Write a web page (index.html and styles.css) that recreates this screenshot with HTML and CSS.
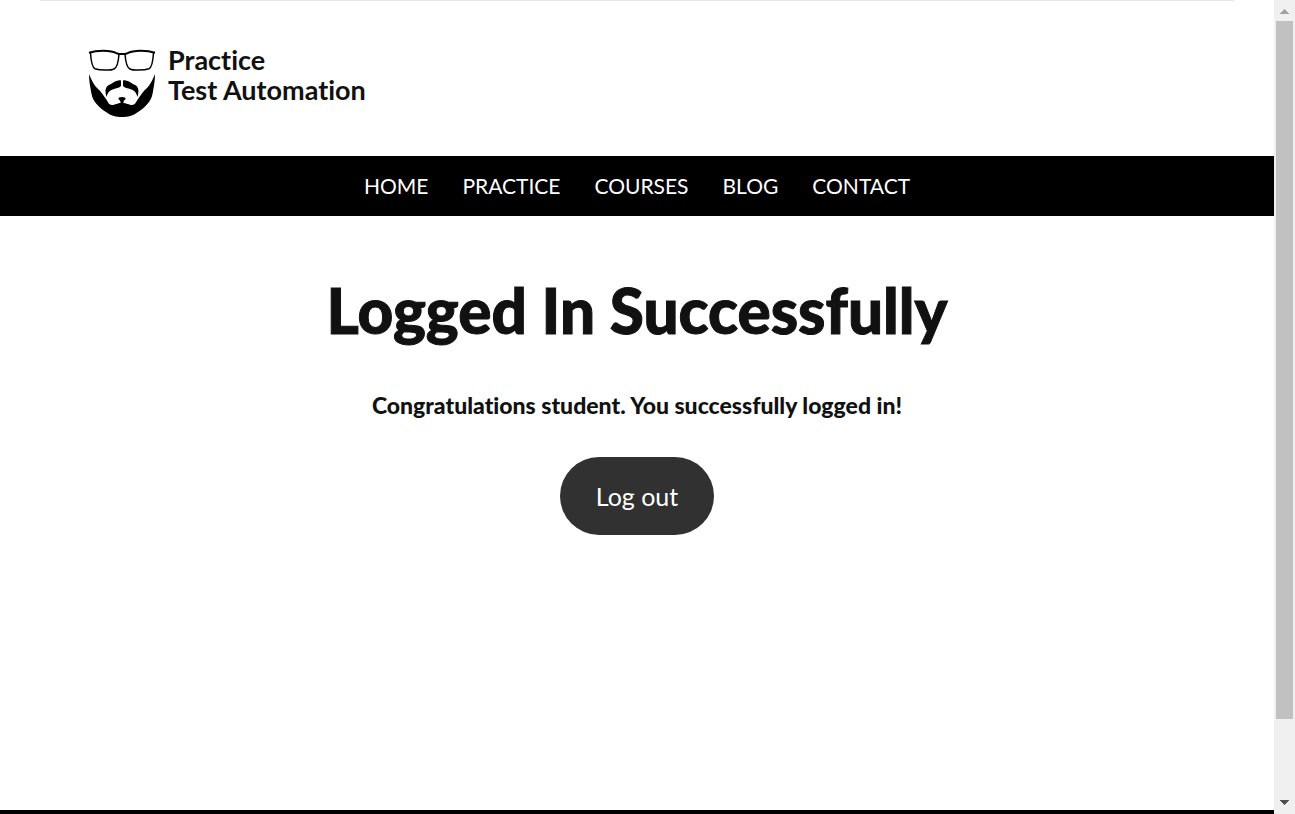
FILE: index.html
```html
<!DOCTYPE html>
<html lang="en">
<head>
<meta charset="utf-8">
<title>Logged In Successfully | Practice Test Automation</title>
<link rel="stylesheet" href="styles.css">
</head>
<body>
<div class="window">
  <div class="page">
    <header class="header">
      <a class="brand" href="#">
        <svg class="brand-mark" viewBox="0 0 68 70" aria-hidden="true">
          <g fill="none" stroke="#000" stroke-linejoin="round">
            <path stroke-width="1.5" d="M2.500 4C3 12 4.500 18.500 7 19.700C12 21.500 23 21.500 26 20C29.500 18.500 30.500 12 31 5M37 5C37.500 12 38.500 18.500 42 20C45 21.500 56 21.500 61 19.700C63.500 18.500 65 12 65.500 4"/>
            <path stroke-width="2" d="M1 3.800C8 1.500 22 0.500 29 4.500C32 5.200 36 5.200 39 4.500C46 0.500 60 1.500 67 3.800"/>
          </g>
          <path d="M1 25C4 32 6 36 9 39C13 42 15 46 18 50C20 53 21 56 24 56C27 56 29 54 34 54C39 54 41 56 44 56C47 56 48 53 50 50C53 46 55 42 59 39C62 36 64 32 67 25C67 33 65.500 39 64.500 45C63 53 56 59 50 63C45 67 40 68 34 68C28 68 23 67 18 63C12 59 5 53 3.500 45C2.500 39 1 33 1 25Z"/>
          <path d="M33 31.500C29 30.500 26 33.500 23 35C18.500 37 16 39 18.500 48C20 43 22 41 26 40C30 39 33 38 33 36.500ZM35 31.500C39 30.500 42 33.500 45 35C49.500 37 52 39 49.500 48C48 43 46 41 42 40C38 39 35 38 35 36.500ZM31 48.500Q34 47.500 37 48.500Q38.500 50 36 51.500L35 55H33L32 51.500Q29.500 50 31 48.500Z"/>
        </svg>
        <span class="brand-name">Practice<br>Test Automation</span>
      </a>
    </header>
    <nav class="nav">
      <a href="#">HOME</a>
      <a href="#">PRACTICE</a>
      <a href="#">COURSES</a>
      <a href="#">BLOG</a>
      <a href="#">CONTACT</a>
    </nav>
    <main class="content">
      <h1 class="title">Logged In Successfully</h1>
      <p class="message">Congratulations student. You successfully logged in!</p>
      <a class="logout" href="#">Log out</a>
    </main>
    <footer class="footer"></footer>
  </div>
  <div class="scrollbar" aria-hidden="true">
    <svg class="arrow" viewBox="0 0 21 21" shape-rendering="crispEdges"><path fill="#a3a3a3" d="M10 9h1v1h1v1h1v1h1v1h1v1H6v-1h1v-1h1v-1h1v-1h1z"/></svg>
    <div class="track"><div class="thumb"></div></div>
    <svg class="arrow" viewBox="0 0 21 21" shape-rendering="crispEdges"><path fill="#505050" d="M6 7h9v1h-1v1h-1v1h-1v1h-1v1h-1v-1H9v-1H8V9H7V8H6z"/></svg>
  </div>
</div>
</body>
</html>
```
FILE: styles.css
```css
body {
  margin: 0;
  background: #fff;
  color: #111;
  font-family: Lato, sans-serif;
  font-variant-ligatures: none;
}

.window {
  display: flex;
  min-height: 100vh;
}

.page {
  flex: 1;
  display: flex;
  flex-direction: column;
}

.header {
  margin: 0 40px;
  padding: 44px 40px 37px;
  border-top: 1px solid #e8e8e8;
}

.brand {
  display: flex;
  align-items: flex-start;
  gap: 12px;
  padding-left: 8px;
  color: #111;
  text-decoration: none;
}

.brand-mark {
  width: 68px;
  height: 70px;
  padding-top: 4px;
}

.brand-name {
  font-size: 27px;
  font-weight: 700;
  line-height: 30px;
}

.nav {
  display: flex;
  justify-content: center;
  gap: 34px;
  background: #000;
  line-height: 60px;
}

.nav a {
  color: #fff;
  font-size: 21px;
  text-decoration: none;
}

.content {
  flex: 1;
  display: flex;
  flex-direction: column;
  align-items: center;
  padding-top: 58px;
}

.title {
  margin: 0;
  font-size: 62px;
  font-weight: 900;
  line-height: 72px;
  -webkit-text-stroke: 1px #111;
}

.message {
  margin: 41px 0 34px;
  font-size: 23px;
  font-weight: 900;
  line-height: 36px;
}

.logout {
  padding: 20px 36px;
  border-radius: 40px;
  background: #313131;
  color: #fff;
  font-size: 25px;
  line-height: 38px;
  text-decoration: none;
}

.footer {
  height: 4px;
  background: #000;
}

.scrollbar {
  display: flex;
  flex-direction: column;
  width: 21px;
  background: #f0f0f0;
}

.arrow {
  display: block;
  width: 21px;
  height: 21px;
}

.track {
  flex: 1;
  padding: 0 2px;
}

.thumb {
  height: 90.4%;
  background: #c1c1c1;
}
```
